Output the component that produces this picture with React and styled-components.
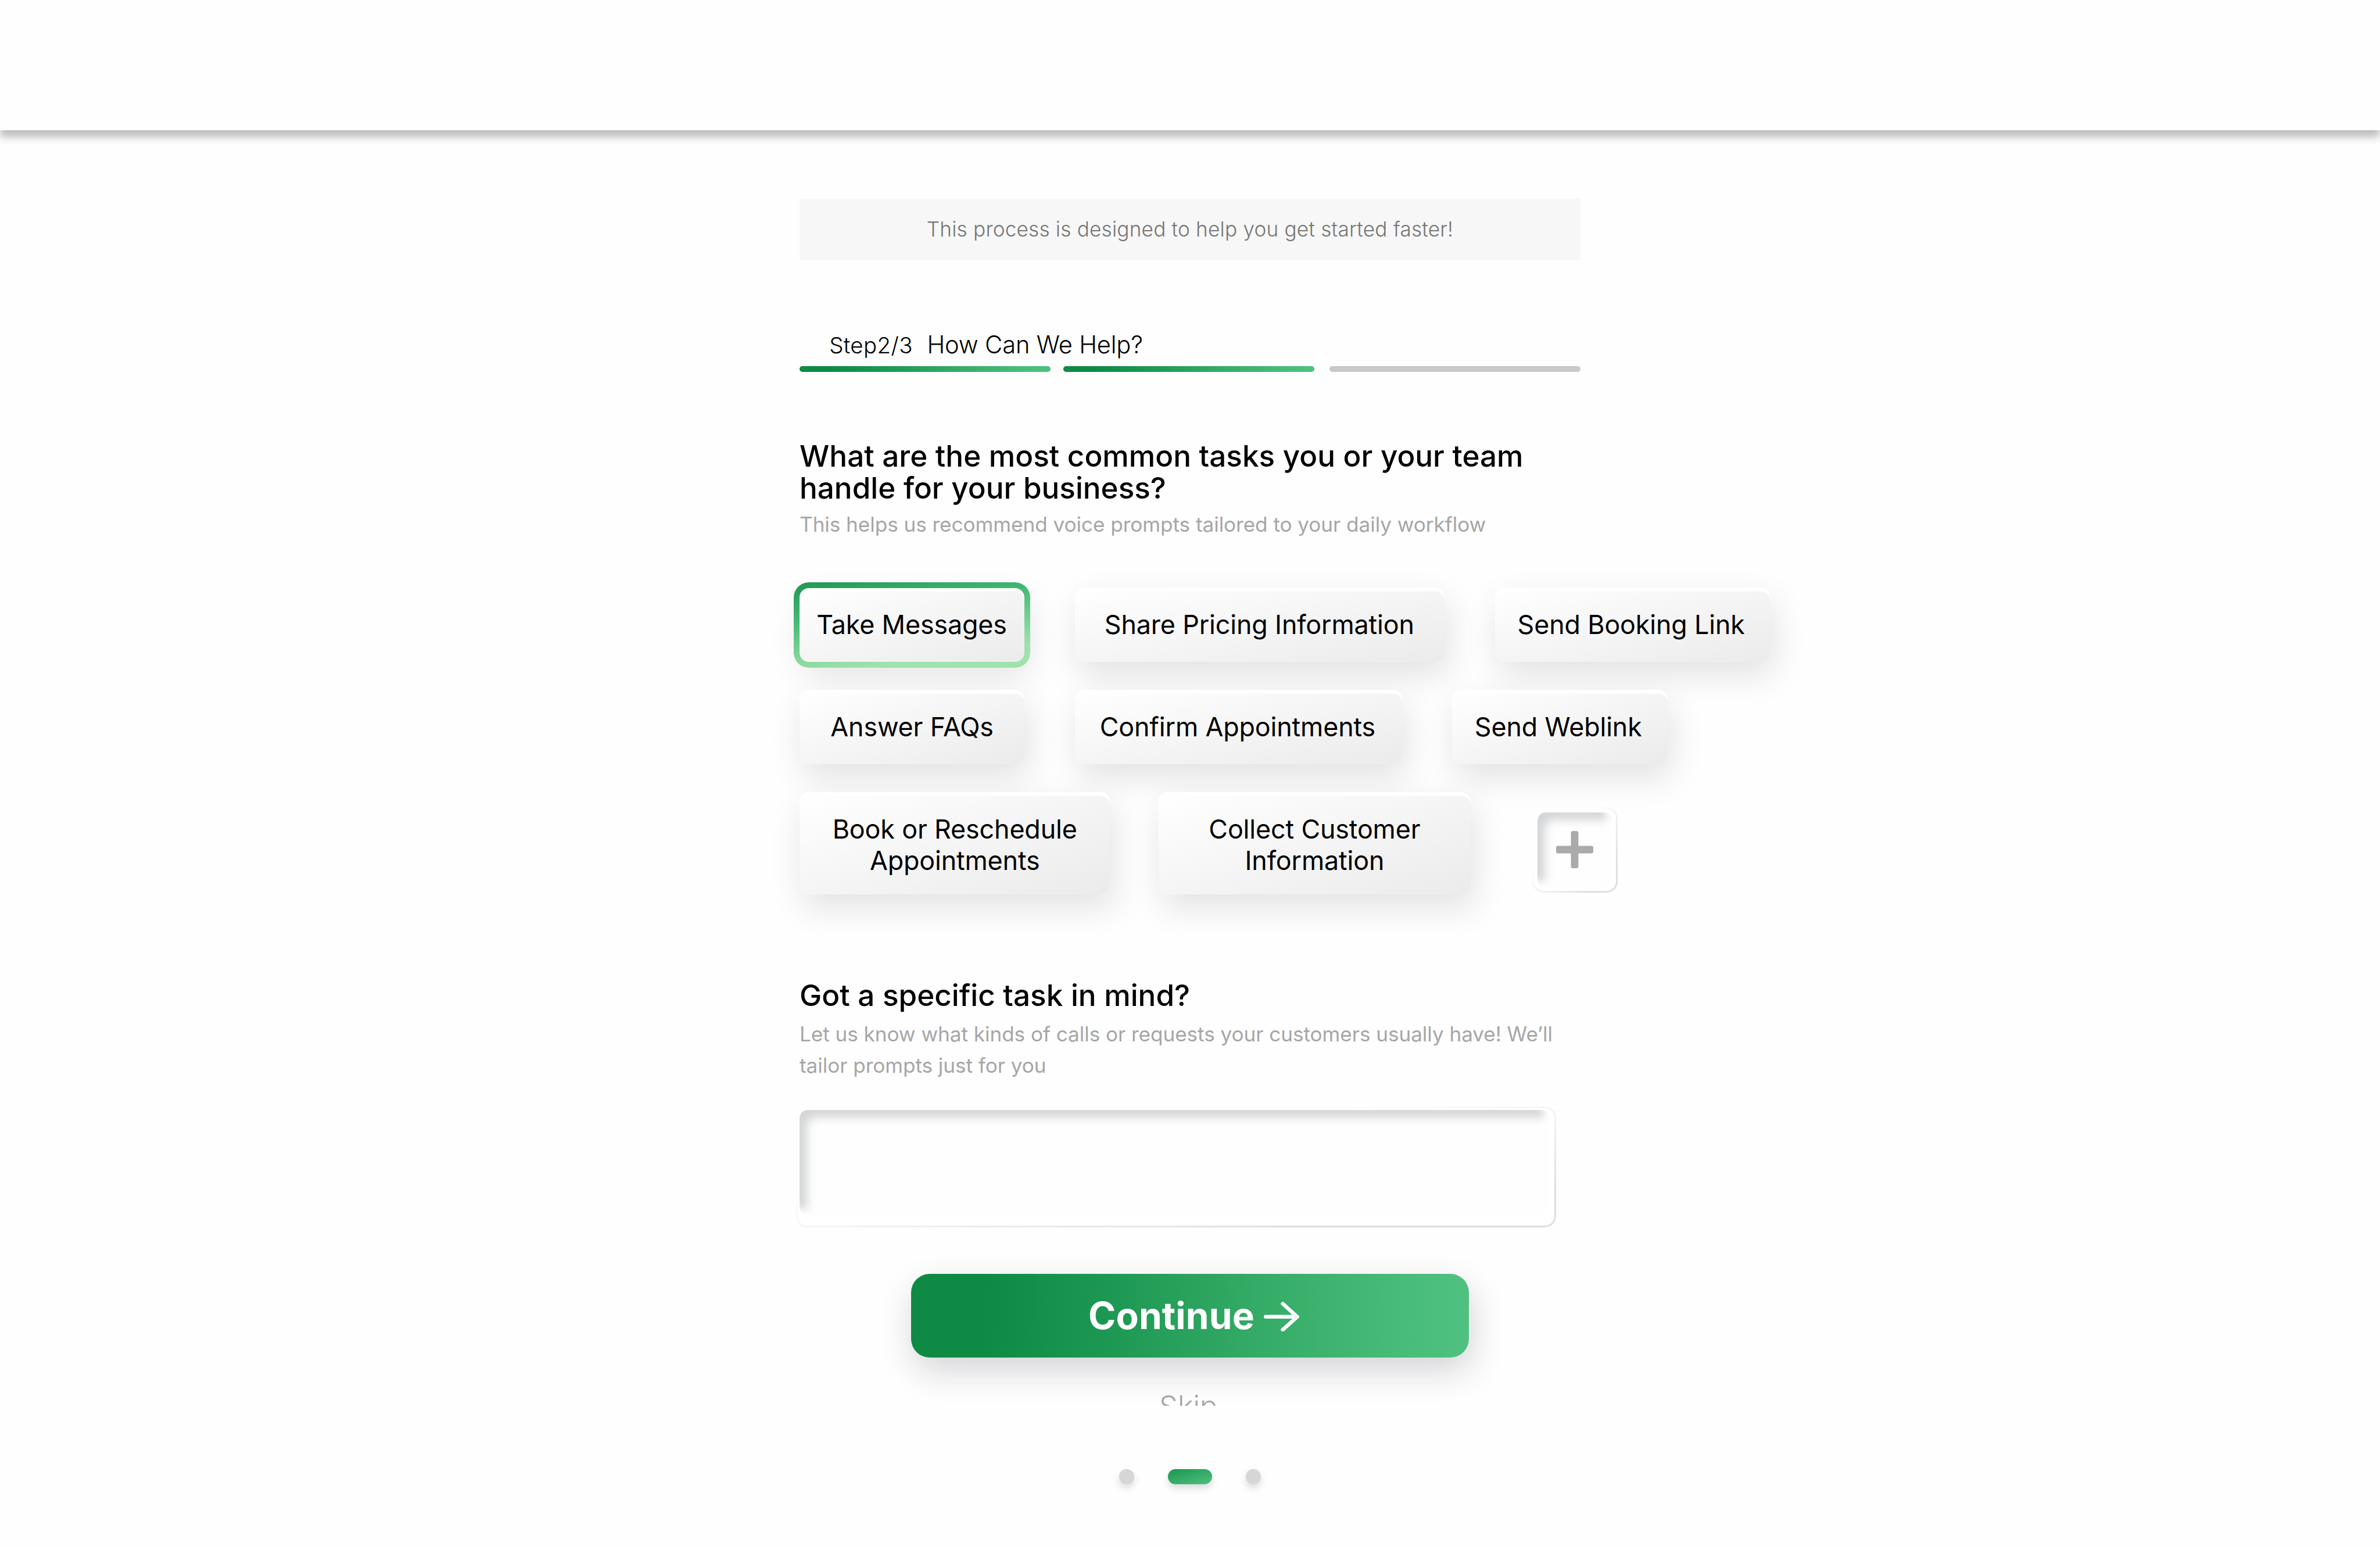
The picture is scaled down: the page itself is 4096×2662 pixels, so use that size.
import React from 'react';
import styled, { createGlobalStyle } from 'styled-components';

// all sizes are on a 1280x832 artboard, drawn at 3.2x
const u = n => `${n * 3.2}px`;

const greenStops = '#0f8a45 13%, #1f9a54 38%, #34ab66 62%, #46bb78 86%, #50c180 100%';

const GlobalStyle = createGlobalStyle`
  html,
  body {
    margin: 0;
    padding: 0;
    background: #fefefe;
  }

  * {
    box-sizing: border-box;
  }
`;

const Page = styled.div`
  width: 4096px;
  height: 2662px;
  display: flex;
  flex-direction: column;
  align-items: center;
  overflow: hidden;
  background: #fefefe;
  color: #000;
  font-family: Inter, sans-serif;
`;

const TopBar = styled.header`
  position: relative;
  z-index: 1;
  width: 100%;
  height: ${u(70)};
  flex: none;
  background: #fefefe;
  box-shadow: 0 ${u(4)} ${u(4)} rgba(0, 0, 0, 0.25);
`;

const Viewport = styled.main`
  width: 100%;
  height: ${u(686)};
  flex: none;
  display: flex;
  flex-direction: column;
  align-items: center;
  padding-top: ${u(37)};
  overflow: hidden;
`;

const Column = styled.div`
  width: ${u(420)};
  display: flex;
  flex-direction: column;
`;

const Banner = styled.div`
  height: ${u(33)};
  display: flex;
  align-items: center;
  justify-content: center;
  padding-bottom: ${u(1)};
  background: #f7f7f7;
  color: #757575;
  font-size: ${u(11)};
  font-weight: 300;
  letter-spacing: ${u(0.056)};
  white-space: nowrap;
`;

const StepLine = styled.div`
  display: flex;
  align-items: baseline;
  gap: ${u(7.7)};
  height: ${u(20.3)};
  margin-top: ${u(36.7)};
  padding-left: ${u(16)};
  font-weight: 300;
  line-height: ${u(18)};
  white-space: nowrap;
`;

const StepCount = styled.span`
  font-size: ${u(12)};
  letter-spacing: ${u(0.12)};
`;

const StepName = styled.span`
  font-size: ${u(13)};
  letter-spacing: ${u(-0.05)};
`;

const Progress = styled.div`
  display: grid;
  grid-template-columns: ${u(142)} ${u(143)} ${u(135)};
`;

const ProgressBar = styled.div`
  width: ${u(135)};
  height: ${u(3)};
  border-radius: ${u(1.5)};
  background: ${props => (props.$done ? `linear-gradient(90deg, ${greenStops})` : '#c8c8c8')};
`;

const Question = styled.h2`
  margin: ${props => u(props.$top)} 0 0;
  font-size: ${u(16)};
  font-weight: 500;
  line-height: ${u(17)};
  white-space: nowrap;
`;

const Hint = styled.p`
  margin: ${props => u(props.$top)} 0 0;
  color: #a6a6a6;
  font-size: ${u(11)};
  font-weight: 400;
  line-height: ${u(17)};
  letter-spacing: ${u(-0.025)};
  white-space: nowrap;
`;

const Chips = styled.div`
  display: flex;
  flex-direction: column;
  gap: ${u(15)};
  margin-top: ${u(25.5)};
`;

const ChipRow = styled.div`
  display: flex;
  align-items: flex-start;
  gap: ${props => u(props.$gap)};
  height: ${props => u(props.$height)};
`;

const Chip = styled.button`
  position: relative;
  flex: none;
  display: flex;
  align-items: center;
  justify-content: center;
  width: ${props => u(props.$width)};
  height: 100%;
  padding: ${props => u(props.$tall ? 1.8 : 0)} ${props => u(props.$trim || 0)} 0 0;
  border: 0;
  border-radius: ${u(5)};
  background: linear-gradient(to bottom right, #fefefe 6%, #f5f5f5 50%, #ebebeb 100%);
  box-shadow:
    inset 0 ${u(2)} 0 #fff,
    ${u(2)} ${u(7)} ${u(18)} rgba(0, 0, 0, 0.115);
  color: #000;
  font-family: inherit;
  font-size: ${u(14)};
  font-weight: 400;
  line-height: ${u(17)};
  letter-spacing: ${u(-0.045)};
  text-align: center;
  white-space: pre;
`;

const SelectedRing = styled.span`
  position: absolute;
  inset: -${u(3)};
  padding: ${u(3)};
  border-radius: ${u(8)};
  background: linear-gradient(172deg, #1f9852 0%, #44b874 32%, #74cf92 56%, #9fe2ab 80%);
  mask: linear-gradient(#000 0 0) content-box exclude, linear-gradient(#000 0 0);
`;

// pressed-in fields: a hairline that fades out to the top left, a white lip, then the hollow
const SunkenFrame = styled.div`
  flex: none;
  display: flex;
  width: ${props => u(props.$width)};
  height: ${props => u(props.$height)};
  margin: ${props => u(props.$top)} 0 0 ${props => u(props.$left)};
  padding: ${u(1)};
  border-radius: ${u(6)};
  background: linear-gradient(to bottom right, #fefefe 36%, #dedfe0 82%);
`;

const SunkenLip = styled.div`
  flex: 1;
  display: flex;
  padding: ${props => props.$pad.map(u).join(' ')};
  border-radius: ${u(5)};
  background: #fff;
`;

const hollow = `
  border: 0;
  border-radius: ${u(4.5)};
  background: #fefefe;
  box-shadow:
    inset -${u(3)} -${u(3)} ${u(4)} #fefefe,
    inset ${u(4)} ${u(4)} ${u(5)} rgba(20, 28, 38, 0.18);
`;

const AddButton = styled.button`
  ${hollow}
  flex: 1;
  display: flex;
  align-items: center;
  justify-content: center;
  padding: 0;
`;

const TaskInput = styled.textarea`
  ${hollow}
  flex: 1;
  margin: 0;
  padding: ${u(10)};
  outline: 0;
  resize: none;
`;

const ContinueButton = styled.button`
  display: flex;
  align-items: center;
  align-self: center;
  justify-content: center;
  gap: ${u(5)};
  width: ${u(300)};
  height: ${u(45)};
  margin-top: ${u(25)};
  padding: 0 0 0 ${u(4)};
  border: 0;
  border-radius: ${u(10)};
  background: linear-gradient(91deg, ${greenStops});
  box-shadow: ${u(1.5)} ${u(7)} ${u(18)} rgba(16, 24, 36, 0.18);
  color: #fff;
  font-family: inherit;
  font-size: ${u(20)};
  font-weight: 700;
  letter-spacing: ${u(0.03)};
`;

const Skip = styled.a`
  align-self: center;
  margin-top: ${u(16.7)};
  padding-right: ${u(1.9)};
  color: #a6a6a6;
  font-size: ${u(16)};
  font-weight: 300;
  line-height: ${u(19)};
  letter-spacing: ${u(-0.13)};
`;

const Pager = styled.nav`
  display: flex;
  gap: ${u(18)};
  margin-top: ${u(34)};
`;

const Dot = styled.span`
  width: ${props => u(props.$active ? 24 : 8)};
  height: ${u(8)};
  border-radius: ${u(4)};
  background: ${props => (props.$active ? 'linear-gradient(165deg, #1b9650, #4fc07e)' : '#d6d6d6')};
  box-shadow: 0 ${u(2)} ${u(4)} rgba(0, 0, 0, 0.14);
`;

const rows = [
  {
    height: 40,
    gap: 27,
    chips: [
      { label: 'Take Messages', width: 121, trim: 0.4, selected: true },
      { label: 'Share Pricing Information', width: 199, trim: 0.4 },
      { label: 'Send Booking Link', width: 148, trim: 1.5 }
    ]
  },
  {
    height: 40,
    gap: 27,
    chips: [
      { label: 'Answer FAQs', width: 121 },
      { label: 'Confirm Appointments', width: 176, trim: 0.8 },
      { label: 'Send Weblink', width: 116, trim: 1.9 }
    ]
  },
  {
    height: 55,
    gap: 26,
    chips: [
      { label: 'Book or Reschedule\nAppointments', width: 167, tall: true },
      { label: 'Collect Customer\nInformation', width: 168, tall: true }
    ],
    add: true
  }
];

function PlusIcon() {
  return (
    <svg width="64" height="64" viewBox="0 0 20 20" fill="#aaaaaa">
      <path d="M9 0h2a1 1 0 0 1 1 1v6.6a.4.4 0 0 0 .4.4H19a1 1 0 0 1 1 1v2a1 1 0 0 1-1 1h-6.6a.4.4 0 0 0-.4.4V19a1 1 0 0 1-1 1H9a1 1 0 0 1-1-1v-6.6a.4.4 0 0 0-.4-.4H1a1 1 0 0 1-1-1V9a1 1 0 0 1 1-1h6.6a.4.4 0 0 0 .4-.4V1a1 1 0 0 1 1-1z" />
    </svg>
  );
}

function ArrowIcon() {
  return (
    <svg width="60.8" height="54.4" viewBox="0 0 19 17" fill="none" stroke="#fff" strokeWidth="2" strokeLinecap="round" strokeLinejoin="round">
      <path d="M1 9h17M10.2 2l7.8 7-7.8 7" />
    </svg>
  );
}

function App() {
  return (
    <Page>
      <GlobalStyle />
      <TopBar />
      <Viewport>
        <Column>
          <Banner>This process is designed to help you get started faster!</Banner>

          <StepLine>
            <StepCount>Step2/3</StepCount>
            <StepName>How Can We Help?</StepName>
          </StepLine>
          <Progress>
            <ProgressBar $done />
            <ProgressBar $done />
            <ProgressBar />
          </Progress>

          <Question $top={36.7}>
            What are the most common tasks you or your team
            <br />
            handle for your business?
          </Question>
          <Hint $top={2.8}>This helps us recommend voice prompts tailored to your daily workflow</Hint>

          <Chips>
            {rows.map((row, i) => (
              <ChipRow key={i} $height={row.height} $gap={row.gap}>
                {row.chips.map(chip => (
                  <Chip key={chip.label} $width={chip.width} $tall={chip.tall} $trim={chip.trim}>
                    {chip.selected && <SelectedRing />}
                    {chip.label}
                  </Chip>
                ))}
                {row.add && (
                  <SunkenFrame $width={46} $height={46} $top={8} $left={7}>
                    <SunkenLip $pad={[2, 2, 2, 2]}>
                      <AddButton>
                        <PlusIcon />
                      </AddButton>
                    </SunkenLip>
                  </SunkenFrame>
                )}
              </ChipRow>
            ))}
          </Chips>

          <Question $top={45.7}>Got a specific task in mind?</Question>
          <Hint $top={3.8}>
            Let us know what kinds of calls or requests your customers usually have! We’ll
            <br />
            tailor prompts just for you
          </Hint>
          <SunkenFrame $width={409} $height={65} $top={13.5} $left={-2}>
            <SunkenLip $pad={[1, 3, 6, 1]}>
              <TaskInput />
            </SunkenLip>
          </SunkenFrame>

          <ContinueButton>
            Continue
            <ArrowIcon />
          </ContinueButton>
          <Skip>Skip</Skip>
        </Column>
      </Viewport>

      <Pager>
        <Dot />
        <Dot $active />
        <Dot />
      </Pager>
    </Page>
  );
}

export default App;
